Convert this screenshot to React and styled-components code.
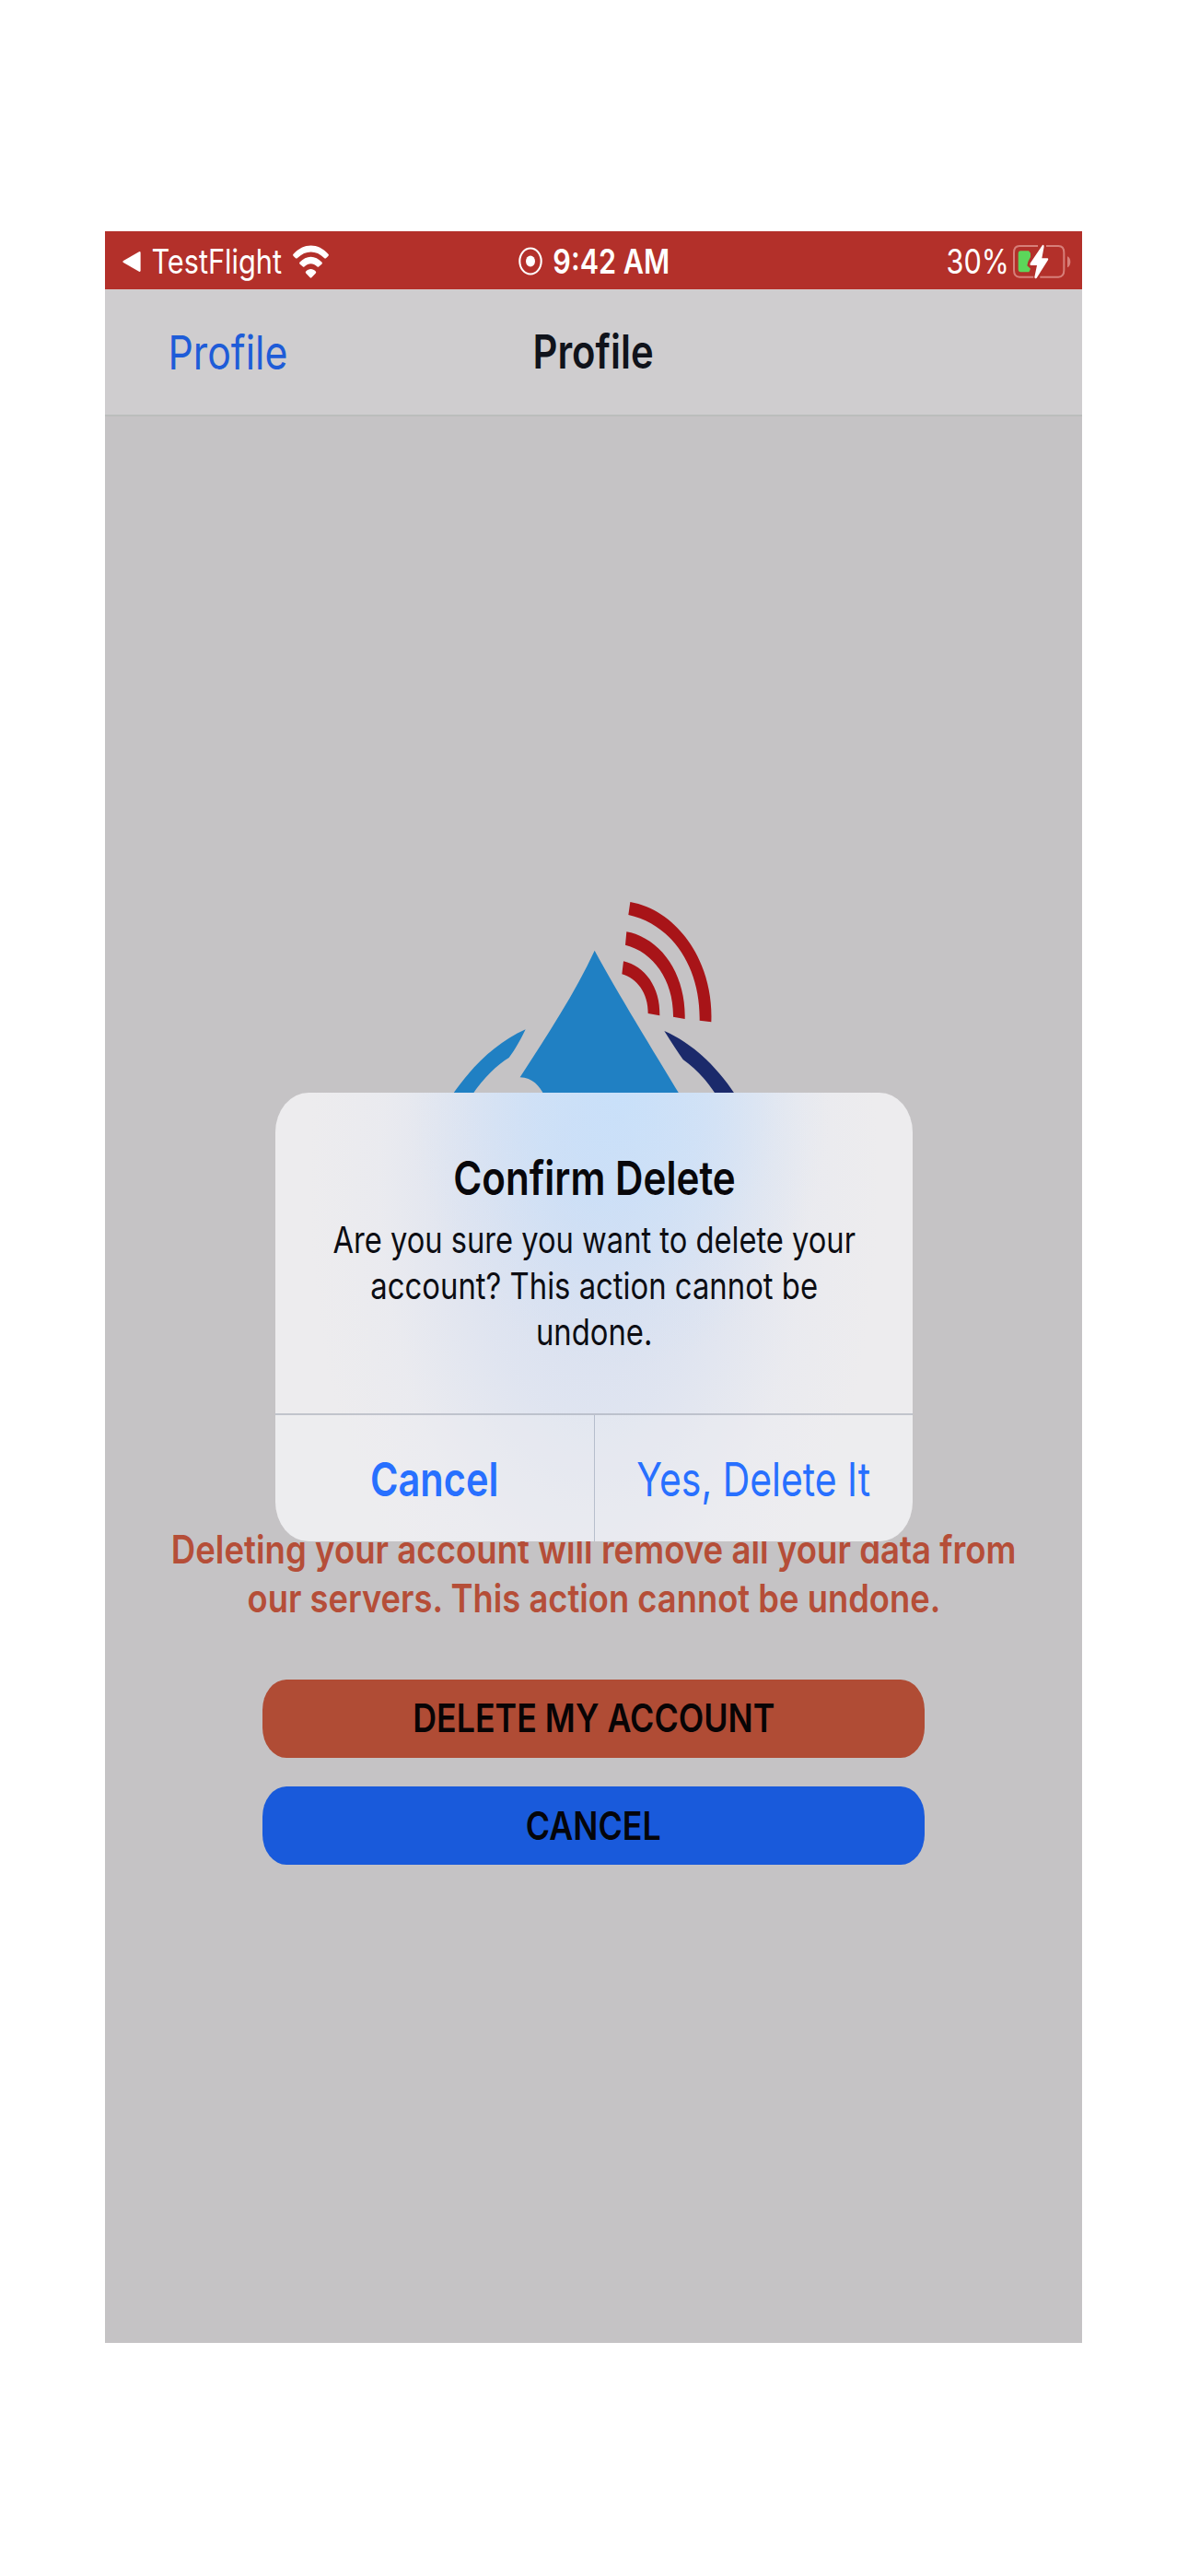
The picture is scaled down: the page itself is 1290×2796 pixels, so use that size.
import React from 'react';
import styled, { createGlobalStyle } from 'styled-components';

const GlobalStyle = createGlobalStyle`
  *, *::before, *::after { box-sizing: border-box; }
  body {
    margin: 0;
    background: #ffffff;
    font-family: Inter, "Liberation Sans", sans-serif;
  }
`;

const Page = styled.main`
  display: flex;
  justify-content: flex-start;
  width: 1290px;
  height: 2796px;
  padding: 251px 115px 253px 114px;
`;

const Phone = styled.section`
  position: relative;
  display: flex;
  flex-direction: column;
  width: 1061px;
  height: 2292px;
  background: #c5c3c5;
`;

/* Condensed single-line text: $w is the width it occupies, $scale squeezes the glyphs. */
const LineBox = styled.span`
  display: flex;
  flex: none;
  justify-content: center;
  width: ${(p) => p.$w}px;
  color: ${(p) => p.$color};
  font-size: ${(p) => p.$size}px;
  font-weight: ${(p) => p.$weight || 400};
  line-height: ${(p) => p.$leading || p.$size}px;
  white-space: nowrap;
`;

const LineText = styled.span`
  flex: none;
  transform: scaleX(${(p) => p.$scale});
`;

function Line({ scale, children, ...box }) {
  return (
    <LineBox {...box}>
      <LineText $scale={scale}>{children}</LineText>
    </LineBox>
  );
}

const StatusBar = styled.header`
  display: grid;
  grid-template-columns: 1fr auto 1fr;
  align-items: center;
  flex: none;
  height: 62.5px;
  padding: 3px 12px 0 19px;
  background: #b3302a;
`;

const StatusGroup = styled.div`
  display: flex;
  align-items: center;
  justify-content: ${(p) => p.$align};
  gap: ${(p) => p.$gap}px;
  padding-right: ${(p) => p.$inset || 0}px;
`;

const Icon = styled.svg`
  display: block;
  flex: none;
`;

const NavBar = styled.nav`
  display: grid;
  grid-template-columns: 1fr auto 1fr;
  align-items: center;
  flex: none;
  height: 138.5px;
  padding: 0 69px 2px;
  border-top: 1px solid #d6cccc;
  border-bottom: 2px solid #bbbdbc;
  background: #cfcdcf;
`;

const NavButton = styled.button`
  justify-self: start;
  padding: 2px 0 0;
  border: 0;
  background: none;
  font-family: inherit;
`;

const Content = styled.div`
  display: flex;
  flex-direction: column;
  align-items: center;
  padding-top: 508px;
`;

const Logo = styled.svg`
  display: block;
  flex: none;
  width: 350px;
  height: 240px;
`;

const Warning = styled.p`
  display: flex;
  flex-direction: column;
  align-items: center;
  margin: 456px 0 61.3px;
`;

const Actions = styled.div`
  display: flex;
  flex-direction: column;
  gap: 31px;
`;

const ActionButton = styled.button`
  display: flex;
  align-items: center;
  justify-content: center;
  width: 719.5px;
  height: 85.3px;
  padding: 0;
  border: 0;
  border-radius: 26px / 33px;
  background: ${(p) => p.$bg};
  font-family: inherit;
`;

const Dialog = styled.div`
  position: absolute;
  top: 934.5px;
  left: 185px;
  display: flex;
  flex-direction: column;
  width: 692px;
  height: 487px;
  overflow: hidden;
  border-radius: 36px / 43px;
  background:
    radial-gradient(ellipse 230px 300px at 54% 0%, rgba(198, 224, 251, 0.85), rgba(198, 224, 251, 0.55) 40%, rgba(198, 224, 251, 0.15) 75%, rgba(198, 224, 251, 0) 100%),
    radial-gradient(ellipse 310px 580px at 50% 20%, rgba(207, 219, 241, 0.85), rgba(212, 222, 242, 0.55) 45%, rgba(225, 230, 243, 0.25) 75%, rgba(230, 233, 243, 0) 100%),
    #edecee;
`;

const DialogBody = styled.div`
  display: flex;
  flex: 1;
  flex-direction: column;
  align-items: center;
  padding-top: 67.3px;
`;

const DialogMessage = styled.p`
  display: flex;
  flex-direction: column;
  align-items: center;
  margin: 17.7px 0 0;
`;

const DialogActions = styled.div`
  display: grid;
  grid-template-columns: 1fr 1fr;
  height: 138.5px;
  border-top: 2px solid rgba(150, 155, 170, 0.5);
  background: rgba(240, 240, 242, 0.3);
`;

const DialogButton = styled.button`
  display: flex;
  align-items: center;
  justify-content: center;
  padding: 2px 0 0;
  border: 0;
  border-left: ${(p) => (p.$divided ? '1.5px solid rgba(150, 162, 180, 0.6)' : '0')};
  background: none;
  font-family: inherit;
`;

function BackArrow() {
  return (
    <Icon width="20" height="24" viewBox="0 0 20 24">
      <path d="M18 1.2Q19.6 0.4 19.6 2.4V21.6Q19.6 23.6 18 22.8L1 13Q-0.4 12 1 11Z" fill="#fff" />
    </Icon>
  );
}

function WifiIcon() {
  return (
    <Icon width="39" height="36" viewBox="654 71 117 108">
      <path d="M655 101C690 63 736 63 770 101Q772 104 769 107L762 114Q759 116 756 113C730 87 696 87 669 113Q666 116 663 114L656 107Q653 104 655 101Z" fill="#fff" />
      <path d="M676 127C698 103 727 103 749 127Q751 130 748 133L739 141Q736 144 733 141C720 129 705 129 692 141Q689 144 686 141L677 133Q674 130 676 127Z" fill="#fff" />
      <path d="M696 157C706 146 719 146 729 157Q731 160 728 163L715 177Q712 179 710 177L697 163Q694 160 696 157Z" fill="#fff" />
    </Icon>
  );
}

function RecordIcon() {
  return (
    <Icon width="26" height="31" viewBox="0 0 26 31">
      <ellipse cx="13" cy="15.5" rx="11.7" ry="14" fill="none" stroke="#fff" strokeWidth="2.1" />
      <ellipse cx="13" cy="15.5" rx="5" ry="6" fill="#fff" />
    </Icon>
  );
}

function BatteryIcon() {
  return (
    <Icon width="63" height="38" viewBox="359 69 189 114">
      <path
        d="M440 75H380Q362 75 362 97V154Q362 176 380 176H426M467 75H507Q525 75 525 97V154Q525 176 507 176H447"
        fill="none"
        stroke="#d77f79"
        strokeWidth="6"
      />
      <path d="M536 109Q546 113 546 127T536 145Z" fill="#d77f79" />
      <path d="M384 91H410L416 98V111L408 126L405 139L416 149L411 160H384Q376 160 376 150V101Q376 91 384 91Z" fill="#5cd65a" />
      <path d="M455 72Q460 70 460 77L453 115H471Q476 116 472 122L436 179Q430 184 429 176L437 138H418Q412 137 416 130Z" fill="#fff" />
    </Icon>
  );
}

function DropLogo() {
  return (
    <Logo viewBox="0 0 1050 720">
      <path d="M62 687C125 595 205 515 302 472C288 502 268 538 248 564C212 585 165 630 127 687Z" fill="#2080c3" />
      <path d="M527 215C600 350 720 545 806 687H363C347 655 325 630 284 628C370 495 465 350 527 215Z" fill="#2080c3" />
      <path d="M754 477C840 515 920 585 987 687H924C887 630 855 600 815 570Q790 535 754 477Z" fill="#1b2a6b" />
      <g fill="#a81418">
        <path d="M643 57C800 85 915 255 907 448L869 443C872 270 780 130 637 99Z" />
        <path d="M631 154C745 175 825 295 821 438L783 431C785 315 720 220 627 197Z" />
        <path d="M621 250C690 265 742 335 739 427L701 420C702 355 665 305 616 292Z" />
      </g>
    </Logo>
  );
}

export default function App() {
  return (
    <>
      <GlobalStyle />
      <Page>
        <Phone>
          <StatusBar>
            <StatusGroup $align="flex-start" $gap={11.5}>
              <BackArrow />
              <Line $w={141.5} $size={36.5} $color="#fff" scale={0.8406}>TestFlight</Line>
              <WifiIcon />
            </StatusGroup>
            <StatusGroup $align="center" $gap={12} $inset={6}>
              <RecordIcon />
              <Line $w={127} $size={36.5} $weight={600} $color="#fff" scale={0.837}>9:42 AM</Line>
            </StatusGroup>
            <StatusGroup $align="flex-end" $gap={4.5}>
              <Line $w={68.3} $size={36.5} $color="#fff" scale={0.8389}>30%</Line>
              <BatteryIcon />
            </StatusGroup>
          </StatusBar>
          <NavBar>
            <NavButton>
              <Line $w={129.8} $size={51} $color="#1e5cd8" scale={0.8385}>Profile</Line>
            </NavButton>
            <Line $w={131} $size={51} $weight={600} $color="#10131b" scale={0.8192}>Profile</Line>
          </NavBar>
          <Content>
            <DropLogo />
            <Warning>
              <Line $w={918} $size={42} $leading={52.7} $weight={600} $color="#b54e38" scale={0.8714}>
                Deleting your account will remove all your data from
              </Line>
              <Line $w={753} $size={42} $leading={52.7} $weight={600} $color="#b54e38" scale={0.8654}>
                our servers. This action cannot be undone.
              </Line>
            </Warning>
            <Actions>
              <ActionButton $bg="#b04c35">
                <Line $w={393} $size={42} $weight={600} $color="#080405" scale={0.8519}>DELETE MY ACCOUNT</Line>
              </ActionButton>
              <ActionButton $bg="#195adb">
                <Line $w={147} $size={42} $weight={600} $color="#04050a" scale={0.852}>CANCEL</Line>
              </ActionButton>
            </Actions>
          </Content>
          <Dialog role="alertdialog">
            <DialogBody>
              <Line $w={306.7} $size={51} $weight={600} $color="#08070b" scale={0.8265}>Confirm Delete</Line>
              <DialogMessage>
                <Line $w={567.6} $size={39.5} $leading={50} $color="#0c0d13" scale={0.8269}>
                  Are you sure you want to delete your
                </Line>
                <Line $w={485.7} $size={39.5} $leading={50} $color="#0c0d13" scale={0.8311}>
                  account? This action cannot be
                </Line>
                <Line $w={126.5} $size={39.5} $leading={50} $color="#0c0d13" scale={0.8303}>
                  undone.
                </Line>
              </DialogMessage>
            </DialogBody>
            <DialogActions>
              <DialogButton>
                <Line $w={139.4} $size={51} $weight={600} $color="#2870ff" scale={0.8136}>Cancel</Line>
              </DialogButton>
              <DialogButton $divided>
                <Line $w={253.8} $size={51} $color="#2870ff" scale={0.802}>Yes, Delete It</Line>
              </DialogButton>
            </DialogActions>
          </Dialog>
        </Phone>
      </Page>
    </>
  );
}
